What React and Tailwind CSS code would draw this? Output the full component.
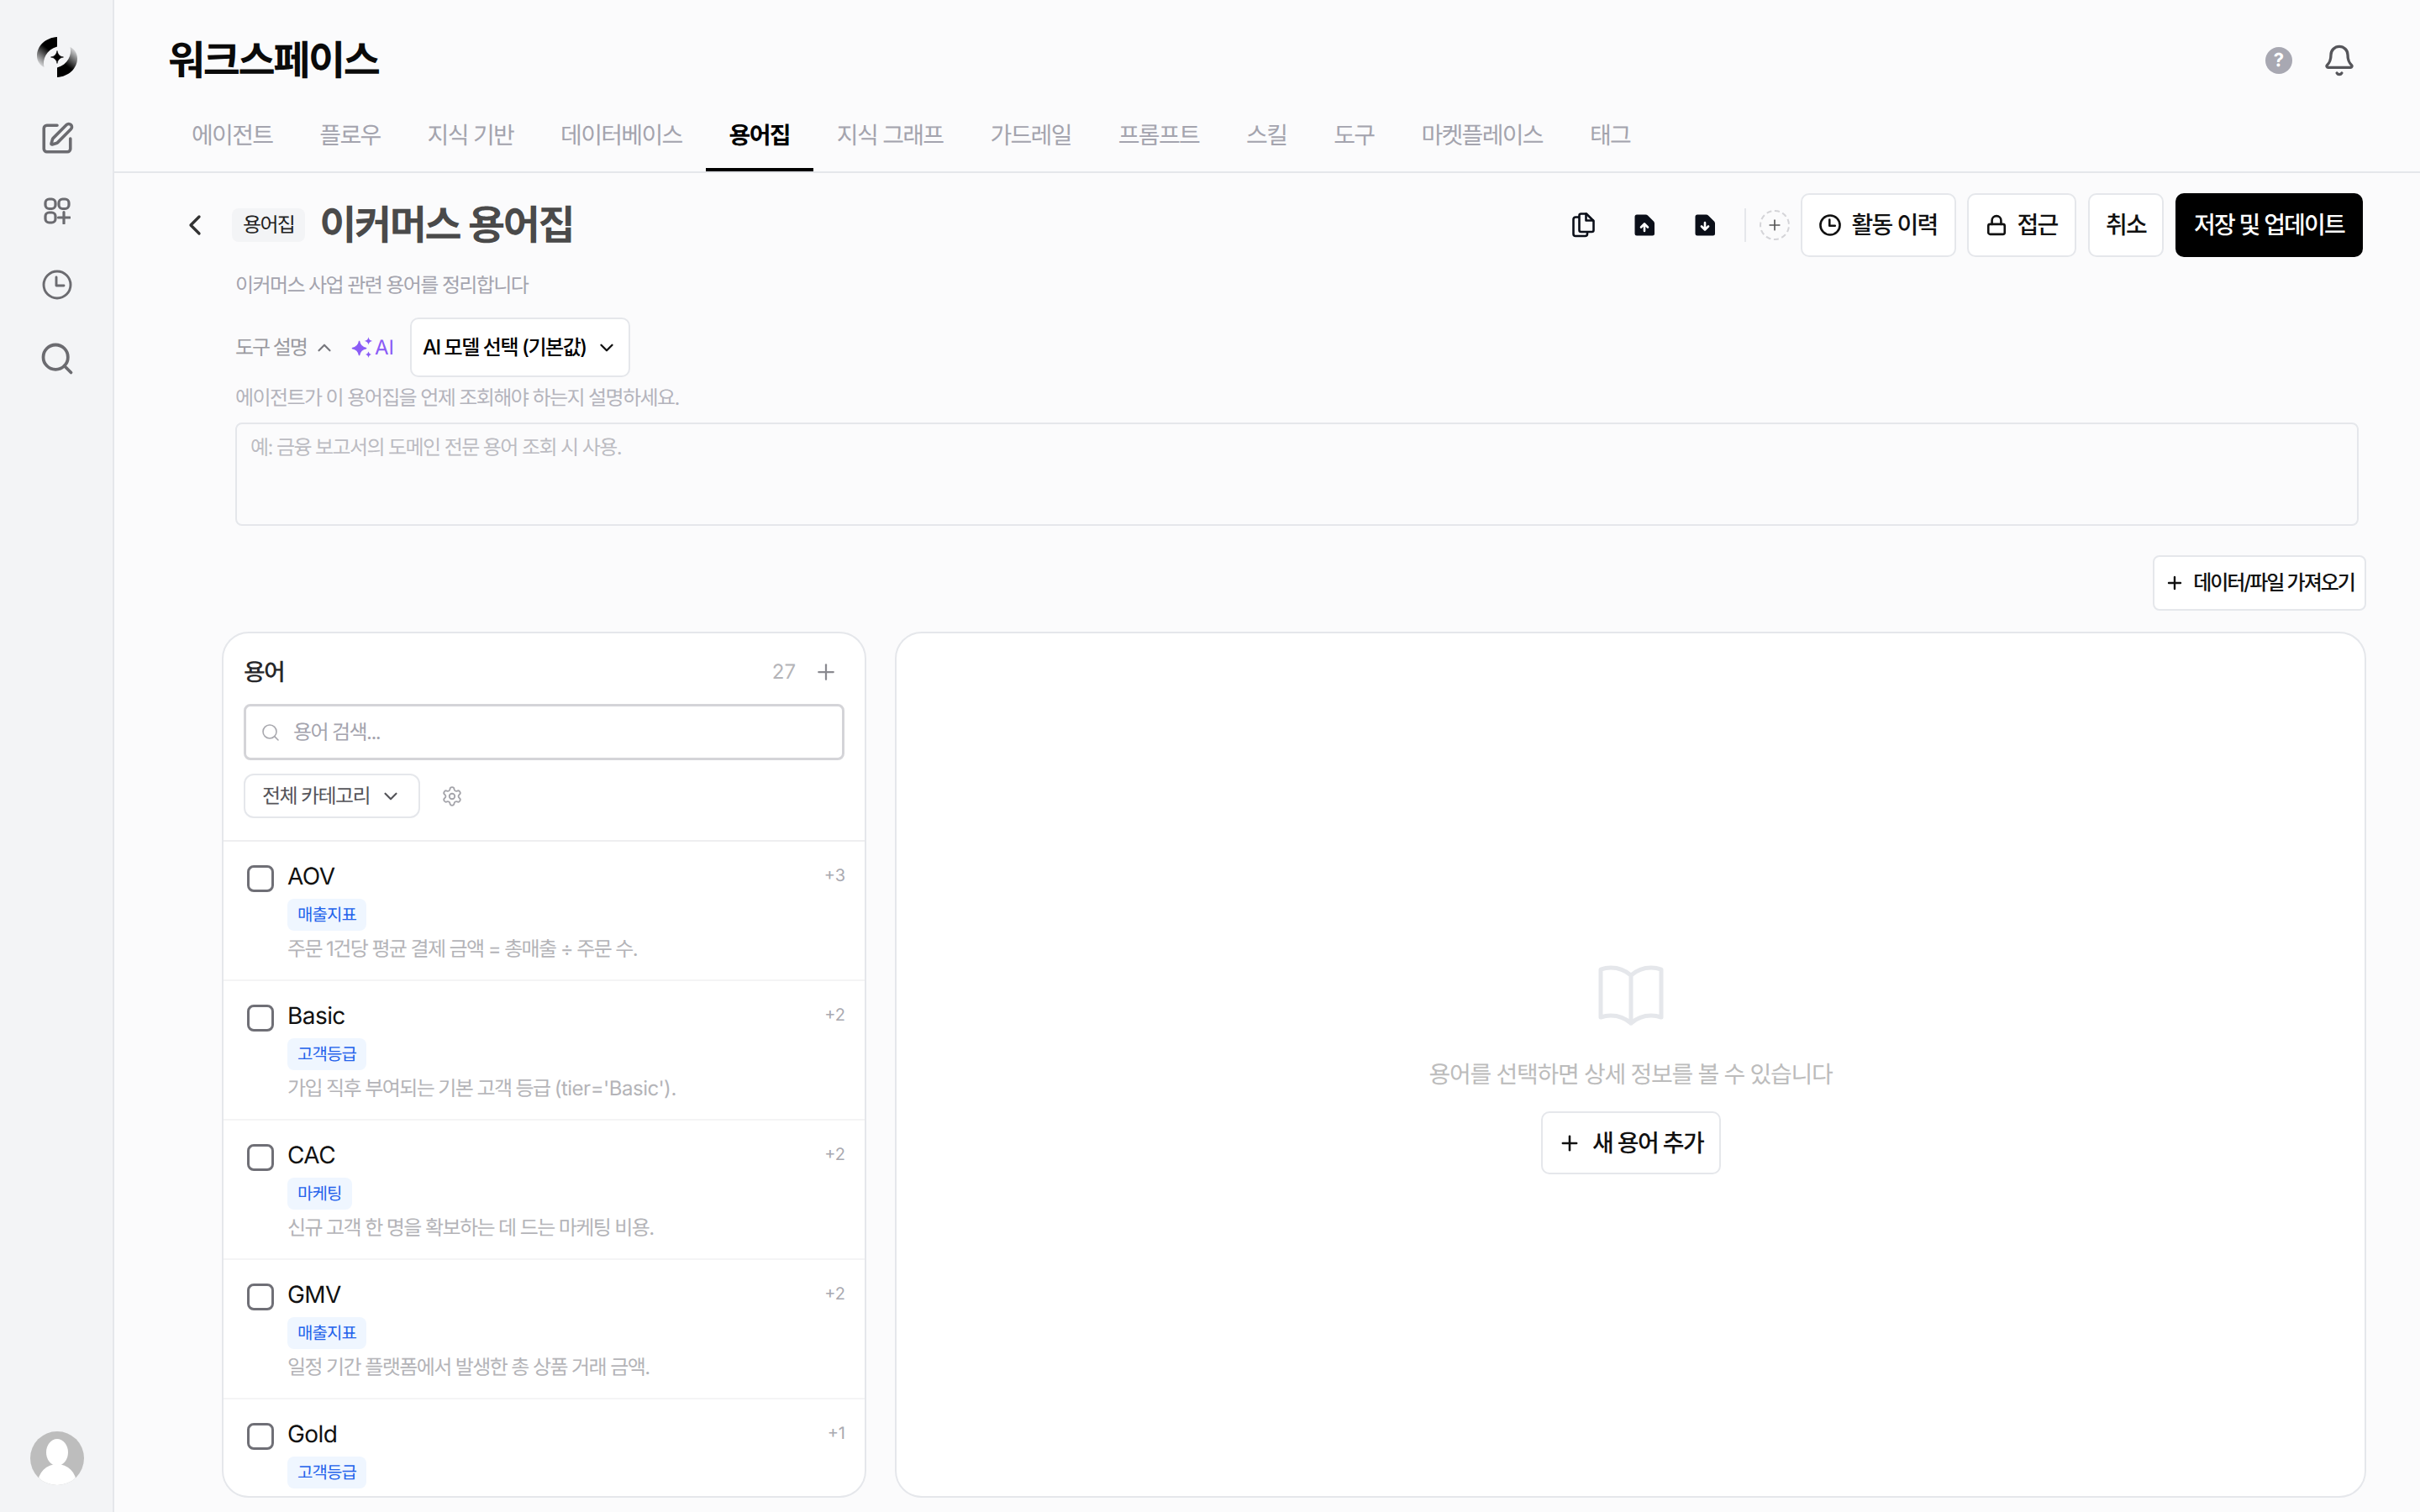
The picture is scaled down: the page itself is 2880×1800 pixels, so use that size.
import React from "react";
import { Bell, ChevronDown, ChevronLeft, ChevronUp, Lock, Plus, Search, Settings, SquarePen } from "lucide-react";

const tabs = ["에이전트", "플로우", "지식 기반", "데이터베이스", "용어집", "지식 그래프", "가드레일", "프롬프트", "스킬", "도구", "마켓플레이스", "태그"];

const terms = [
  { name: "AOV", extra: "+3", tag: "매출지표", desc: "주문 1건당 평균 결제 금액 = 총매출 ÷ 주문 수." },
  { name: "Basic", extra: "+2", tag: "고객등급", desc: "가입 직후 부여되는 기본 고객 등급 ", latin: "(tier='Basic')." },
  { name: "CAC", extra: "+2", tag: "마케팅", desc: "신규 고객 한 명을 확보하는 데 드는 마케팅 비용." },
  { name: "GMV", extra: "+2", tag: "매출지표", desc: "일정 기간 플랫폼에서 발생한 총 상품 거래 금액." },
  { name: "Gold", extra: "+1", tag: "고객등급", desc: "" },
];

function Logo() {
  const arc = "M24 0C10.5 0.8 0 10.5 0 22.5C0 28.5 3.2 33.5 8.5 36C6.2 27 11 15 24 11.5Z";
  return (
    <svg width="48" height="48" viewBox="0 0 48 48">
      <defs>
        <linearGradient id="lg" x1="0.7" y1="0.05" x2="0.2" y2="1">
          <stop offset="0.35" stopColor="#000" />
          <stop offset="1" stopColor="#000" stopOpacity="0.05" />
        </linearGradient>
      </defs>
      <path d={arc} fill="url(#lg)" />
      <path d={arc} fill="url(#lg)" transform="rotate(180 24 24)" />
      <path d="M24 16.5Q25 23 31.5 24Q25 25 24 31.5Q23 25 16.5 24Q23 23 24 16.5Z" fill="#000" stroke="#000" strokeWidth="0.6" />
    </svg>
  );
}

function AppsIcon() {
  return (
    <svg width="32" height="32" viewBox="0 0 32 32" fill="none" stroke="#6b6b70" strokeWidth="3.2" strokeLinecap="round">
      <rect x="2" y="2" width="12" height="11.5" rx="4.5" />
      <rect x="18" y="2" width="12" height="11.5" rx="4.5" />
      <rect x="2" y="18" width="12" height="12" rx="4.5" />
      <path d="M24 17.5V31M17.5 24H31" />
    </svg>
  );
}

function ClockIcon({ size = 36, stroke = "#6b6b70", sw = 2.9 }) {
  return (
    <svg width={size} height={size} viewBox="0 0 36 36" fill="none" stroke={stroke} strokeWidth={sw} strokeLinecap="round" strokeLinejoin="round">
      <circle cx="18" cy="18" r="16" />
      <path d="M17 9V19H26" />
    </svg>
  );
}

function CopyIcon() {
  return (
    <svg width="28" height="30" viewBox="0 0 28 30" fill="none" stroke="#0b0f19" strokeWidth="2.6" strokeLinejoin="round" strokeLinecap="round">
      <path d="M8.5 5.5H4A2.5 2.5 0 0 0 1.5 8V25.5A2.5 2.5 0 0 0 4 28H15.5A2.5 2.5 0 0 0 18 25.5V23" />
      <path d="M8.5 3.5A2 2 0 0 1 10.5 1.5H17L25.5 10V21A2 2 0 0 1 23.5 23H10.5A2 2 0 0 1 8.5 21Z" fill="#fbfbfc" />
      <path d="M16.5 1.5V9.5H25" />
    </svg>
  );
}

function FileArrow({ dir }) {
  return (
    <svg width="24" height="26" viewBox="0 0 24 26">
      <path d="M3 0.5H13.5Q15 0.5 16 1.5L23 8.5Q24 9.5 24 11V23Q24 25.5 21.5 25.5H3Q0.5 25.5 0.5 23V3Q0.5 0.5 3 0.5Z" fill="#0b0f19" />
      <path
        d={dir === "up" ? "M12 20V12M8 15.5L12 11.5L16 15.5" : "M12 10V18M8 14.5L12 18.5L16 14.5"}
        fill="none"
        stroke="#fff"
        strokeWidth="2.6"
        strokeLinecap="round"
        strokeLinejoin="round"
      />
    </svg>
  );
}

function Sparkle() {
  return (
    <svg width="30" height="30" viewBox="0 0 26 26" fill="#8b5cf6">
      <path d="M10 6Q11 12.5 17.5 13.5Q11 14.5 10 21Q9 14.5 2.5 13.5Q9 12.5 10 6Z" stroke="#8b5cf6" strokeWidth="1" />
      <path d="M19.5 2Q20 5.5 23.5 6Q20 6.5 19.5 10Q19 6.5 15.5 6Q19 5.5 19.5 2Z" />
      <path d="M19.5 17Q20 19.5 22.5 20Q20 20.5 19.5 23.5Q19 20.5 16.5 20Q19 19.5 19.5 17Z" />
    </svg>
  );
}

function Avatar() {
  return (
    <svg width="64" height="64" viewBox="0 0 64 64">
      <defs>
        <clipPath id="av"><circle cx="32" cy="32" r="32" /></clipPath>
      </defs>
      <g clipPath="url(#av)">
        <rect width="64" height="64" fill="#bdbdbd" />
        <ellipse cx="32" cy="25" rx="13" ry="16" fill="#fff" />
        <circle cx="32" cy="62" r="23" fill="#fff" />
      </g>
    </svg>
  );
}

function TermRow({ term, last }) {
  return (
    <div className={`h-[166px] shrink-0 flex pl-[28px] pr-[23px] pt-[28px] ${last ? "" : "border-b-2 border-[#f4f4f5]"}`}>
      <div className="w-8 h-8 rounded-lg border-[3px] border-[#6f6f76] shrink-0 bg-white" />
      <div className="ml-4 flex-1 min-w-0">
        <div className="flex justify-between items-start h-7">
          <span className="text-[28px] leading-[26px] font-normal tracking-[-0.02em] text-[#111]">{term.name}</span>
          <span className="text-[20px] leading-6 tracking-normal text-[#a9a9b0]">{term.extra}</span>
        </div>
        <div className="mt-[12px] flex">
          <span className="h-[38px] px-3 rounded-lg bg-[#eff6ff] text-[#2563eb] text-[20px] leading-[38px] tracking-[-0.045em]">{term.tag}</span>
        </div>
        <div className="mt-[4px] text-[24px] leading-9 text-[#b4b4b8]">
          {term.desc}
          {term.latin && <span className="tracking-[-0.02em]">{term.latin}</span>}
        </div>
      </div>
    </div>
  );
}

const outlined = "h-[76px] flex items-center justify-center rounded-[10px] border-2 border-[#e5e7eb] bg-white text-[28px] font-medium text-[#111] whitespace-nowrap tracking-[-0.06em]";

export default function App() {
  return (
    <div className="w-[2880px] h-[1800px] flex overflow-hidden bg-[#fbfbfc] tracking-[-0.1em] [text-rendering:geometricPrecision] [font-family:Inter,'Noto_Sans_CJK_KR',sans-serif]">
      <aside className="w-[136px] shrink-0 h-full bg-[#f3f4f6] border-r-2 border-[#e5e7eb] pl-[2px] flex flex-col items-center">
        <div className="mt-11 mb-[52px]"><Logo /></div>
        <SquarePen size={42} color="#6b6b70" strokeWidth={2.05} />
        <div className="mt-[49px]"><AppsIcon /></div>
        <div className="mt-[54px]"><ClockIcon /></div>
        <Search size={44} color="#6b6b70" strokeWidth={2.05} className="mt-[48px]" />
        <div className="mt-auto mb-8"><Avatar /></div>
      </aside>

      <main className="flex-1 min-w-0 flex flex-col">
        <header className="h-[206px] shrink-0 border-b-2 border-[#e5e7eb] flex flex-col">
          <div className="h-[144px] shrink-0 pl-16 pr-[76px] flex items-center justify-between">
            <h1 className="text-[48px] leading-[56px] font-semibold tracking-[-0.05em] text-[#0a0a0a]">워크스페이스</h1>
            <div className="flex items-center gap-9">
              <div className="w-8 h-8 rounded-full bg-[#a8a8b2] text-white flex items-center justify-center text-[22px] font-bold tracking-normal">?</div>
              <Bell size={40} color="#55555a" strokeWidth={2} />
            </div>
          </div>
          <nav className="flex pl-16 h-[60px]">
            {tabs.map((t) => (
              <div
                key={t}
                className={`px-[28px] text-[28px] leading-[34px] h-[60px] whitespace-nowrap tracking-[-0.06em] ${t === "용어집" ? "text-black font-semibold border-b-4 border-black" : "text-[#a4a4ae]"}`}
              >
                {t}
              </div>
            ))}
          </nav>
        </header>

        <section className="flex-1 min-h-0 flex flex-col">
          <div className="mt-6 h-[76px] shrink-0 flex items-center pl-[76px] pr-[68px]">
            <ChevronLeft size={40} color="#333" strokeWidth={2} />
            <span className="ml-6 h-10 px-[13px] rounded-lg bg-[#f3f4f6] text-[24px] leading-10 text-[#222] tracking-[-0.07em]">용어집</span>
            <span className="ml-[17px] text-[48px] leading-[56px] font-semibold text-[#4a4a4a] tracking-[-0.05em]">이커머스 용어집</span>
            <div className="ml-auto flex items-center">
              <div className="w-[72px] flex justify-center"><CopyIcon /></div>
              <div className="w-[72px] flex justify-center"><FileArrow dir="up" /></div>
              <div className="w-[72px] flex justify-center"><FileArrow dir="down" /></div>
              <div className="ml-[11px] w-[2px] h-10 bg-[#e5e7eb]" />
              <div className="ml-4 w-9 h-9 rounded-full border-2 border-dashed border-[#d4d4d8] flex items-center justify-center">
                <Plus size={20} color="#555" strokeWidth={2} />
              </div>
              <button className={`ml-[13px] w-[185px] gap-3 ${outlined}`}>
                <ClockIcon size={26} stroke="#111" sw={3.6} />활동 이력
              </button>
              <button className={`ml-[13px] w-[130px] gap-[11px] ${outlined}`}>
                <Lock size={26} color="#111" strokeWidth={2.4} />접근
              </button>
              <button className={`ml-[14px] w-[90px] ${outlined}`}>취소</button>
              <button className="ml-[14px] h-[76px] w-[223px] rounded-[10px] bg-black text-[28px] font-medium text-white whitespace-nowrap tracking-[-0.065em]">저장 및 업데이트</button>
            </div>
          </div>

          <div className="pl-[144px] pr-[73px] shrink-0">
            <p className="mt-4 text-[24px] leading-9 text-[#a4a4ae]">이커머스 사업 관련 용어를 정리합니다</p>
            <div className="mt-5 h-[71px] flex items-center">
              <span className="text-[24px] text-[#9a9aa0] tracking-[-0.085em]">도구 설명</span>
              <ChevronUp size={26} color="#77777d" strokeWidth={2} className="ml-2" />
              <span className="ml-[17px]"><Sparkle /></span>
              <span className="text-[24px] text-[#8b5cf6] tracking-normal">AI</span>
              <button className="ml-[19px] h-[71px] w-[262px] px-[13px] flex items-center justify-between rounded-[10px] border-2 border-[#e5e7eb] bg-white text-[24px] font-medium text-black whitespace-nowrap tracking-[-0.06em]">
                AI 모델 선택 (기본값)
                <ChevronDown size={26} color="#111" strokeWidth={2.2} />
              </button>
            </div>
            <p className="mt-[7px] text-[24px] leading-9 text-[#b4b4bc]">에이전트가 이 용어집을 언제 조회해야 하는지 설명하세요.</p>
            <div className="mt-[11px] h-[123px] rounded-lg border-2 border-[#e5e7eb] px-4 pt-[10px] text-[24px] leading-9 text-[#bcbcc2]">
              예: 금융 보고서의 도메인 전문 용어 조회 시 사용.
            </div>
          </div>

          <div className="mt-[35px] pr-16 flex justify-end shrink-0">
            <button className="h-[66px] w-[254px] flex items-center justify-center gap-[10px] rounded-lg border-2 border-[#e5e7eb] bg-white text-[24px] font-medium text-[#111] whitespace-nowrap tracking-[-0.085em]">
              <Plus size={24} color="#111" strokeWidth={2.4} />데이터/파일 가져오기
            </button>
          </div>

          <div className="mt-[25px] h-[1031px] shrink-0 pl-[128px] pr-16 flex gap-[34px]">
            <div className="w-[767px] shrink-0 h-full rounded-[32px] border-2 border-[#e5e7eb] bg-white overflow-hidden flex flex-col">
              <div className="px-6 pt-[26px] shrink-0">
                <div className="flex items-center h-10">
                  <span className="text-[28px] font-medium text-[#27272a] tracking-[-0.06em]">용어</span>
                  <span className="ml-auto text-[24px] text-[#b4b4b8] tracking-normal">27</span>
                  <Plus size={30} color="#8a8a90" strokeWidth={1.8} className="ml-[21px] mr-[7px]" />
                </div>
                <div className="mt-[18px] h-[67px] rounded-lg border-[3px] border-[#d4d4d8] flex items-center pl-[17px]">
                  <Search size={24} color="#a8a8ae" strokeWidth={1.6} />
                  <span className="ml-[15px] text-[24px] text-[#a4a4ae]">용어 검색...</span>
                </div>
                <div className="mt-4 flex items-center">
                  <div className="h-[53px] w-[210px] px-[20px] rounded-xl border-2 border-[#e5e7eb] flex items-center justify-between text-[24px] text-[#55555a] whitespace-nowrap">
                    전체 카테고리
                    <ChevronDown size={26} color="#55555a" strokeWidth={2} />
                  </div>
                  <Settings size={26} color="#a4a4aa" strokeWidth={1.7} className="ml-[25px]" />
                </div>
              </div>
              <div className="mt-[26px] border-t-2 border-[#eeeef0] flex-1 min-h-0 flex flex-col">
                {terms.map((t, i) => (
                  <TermRow key={t.name} term={t} last={i === terms.length - 1} />
                ))}
              </div>
            </div>

            <div className="flex-1 min-w-0 h-full rounded-[32px] border-2 border-[#e5e7eb] bg-white flex flex-col items-center pt-[383px]">
              <svg width="96" height="96" viewBox="0 0 24 24" fill="none" stroke="#e5e7eb" strokeWidth="1.25" strokeLinecap="round" strokeLinejoin="round">
                <path d="M12 6.042A8.967 8.967 0 0 0 6 3.75c-1.052 0-2.062.18-3 .512v14.25A8.987 8.987 0 0 1 6 18c2.305 0 4.408.867 6 2.292m0-14.25a8.966 8.966 0 0 1 6-2.292c1.052 0 2.062.18 3 .512v14.25A8.987 8.987 0 0 0 18 18a8.967 8.967 0 0 0-6 2.292m0-14.25v14.25" />
              </svg>
              <div className="mt-[26px] text-[28px] leading-10 text-[#bcbcbc] whitespace-nowrap tracking-[-0.046em]">용어를 선택하면 상세 정보를 볼 수 있습니다</div>
              <button className="mt-6 h-[75px] w-[214px] flex items-center justify-center gap-[13px] rounded-[10px] border-2 border-[#e5e7eb] bg-white text-[28px] font-medium text-[#111] whitespace-nowrap tracking-[-0.06em]">
                <Plus size={28} color="#111" strokeWidth={2.2} />새 용어 추가
              </button>
            </div>
          </div>
        </section>
      </main>
    </div>
  );
}
